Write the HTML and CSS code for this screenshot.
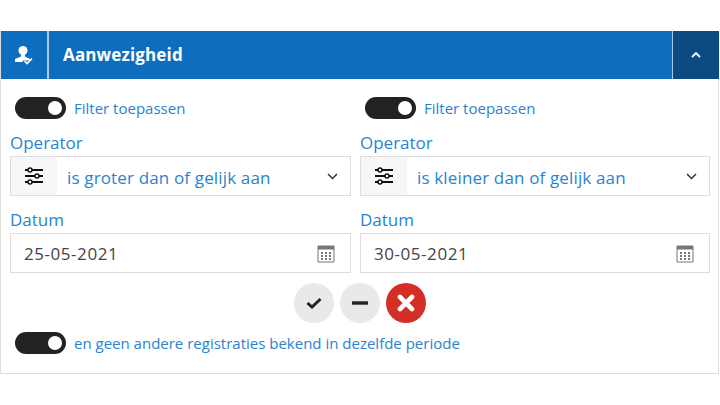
FILE: index.html
```html
<!DOCTYPE html>
<html lang="nl">
<head>
    <meta charset="UTF-8">
    <title>Aanwezigheid</title>
    <link rel="stylesheet" href="styles.css">
</head>
<body>
    <div class="panel">
        <div class="panel-header">
            <div class="header-icon">
                <svg width="20" height="20" viewBox="0 0 20 20">
                    <circle cx="9" cy="5.500" r="4.500" fill="#fff"/>
                    <path d="M7 9h4v2.500l5 2.500v1.500H9.500L8 17H1v-3l6-2.500z" fill="#fff"/>
                    <path d="M10.500 16l2.500 2.500 5-5" fill="none" stroke="#fff" stroke-width="1.600"/>
                </svg>
            </div>
            <div class="header-title">Aanwezigheid</div>
            <div class="header-toggle">
                <svg width="10" height="6" viewBox="0 0 10 6">
                    <path d="M1 5l4-4 4 4" fill="none" stroke="#fff" stroke-width="1.800"/>
                </svg>
            </div>
        </div>
        <div class="panel-body">
            <div class="columns">
                <div class="column">
                    <div class="switch-row">
                        <span class="switch"></span>
                        <span class="switch-label">Filter toepassen</span>
                    </div>
                    <label class="field-label">Operator</label>
                    <div class="field">
                        <span class="addon">
                            <svg width="20" height="18" viewBox="0 0 20 18">
                                <path d="M1 3h18M1 9h18M1 15h18" stroke="#111" stroke-width="2.200"/>
                                <circle cx="6" cy="3" r="2" fill="#fff" stroke="#111" stroke-width="1.500"/>
                                <circle cx="13" cy="9" r="2" fill="#fff" stroke="#111" stroke-width="1.500"/>
                                <circle cx="6" cy="15" r="2" fill="#fff" stroke="#111" stroke-width="1.500"/>
                            </svg>
                        </span>
                        <span class="select-text">is groter dan of gelijk aan</span>
                        <svg class="chevron" width="11" height="7" viewBox="0 0 11 7">
                            <path d="M1 1l4.500 4.500L10 1" fill="none" stroke="#333" stroke-width="1.500"/>
                        </svg>
                    </div>
                    <label class="field-label">Datum</label>
                    <div class="field date-field">
                        <span class="date-text">25-05-2021</span>
                        <svg class="calendar" width="18" height="19" viewBox="0 0 18 19">
                            <use href="#calendar-icon"/>
                        </svg>
                    </div>
                </div>
                <div class="column">
                    <div class="switch-row">
                        <span class="switch"></span>
                        <span class="switch-label">Filter toepassen</span>
                    </div>
                    <label class="field-label">Operator</label>
                    <div class="field">
                        <span class="addon">
                            <svg width="20" height="18" viewBox="0 0 20 18">
                                <path d="M1 3h18M1 9h18M1 15h18" stroke="#111" stroke-width="2.200"/>
                                <circle cx="6" cy="3" r="2" fill="#fff" stroke="#111" stroke-width="1.500"/>
                                <circle cx="13" cy="9" r="2" fill="#fff" stroke="#111" stroke-width="1.500"/>
                                <circle cx="6" cy="15" r="2" fill="#fff" stroke="#111" stroke-width="1.500"/>
                            </svg>
                        </span>
                        <span class="select-text">is kleiner dan of gelijk aan</span>
                        <svg class="chevron" width="11" height="7" viewBox="0 0 11 7">
                            <path d="M1 1l4.500 4.500L10 1" fill="none" stroke="#333" stroke-width="1.500"/>
                        </svg>
                    </div>
                    <label class="field-label">Datum</label>
                    <div class="field date-field">
                        <span class="date-text">30-05-2021</span>
                        <svg class="calendar" width="18" height="19" viewBox="0 0 18 19">
                            <use href="#calendar-icon"/>
                        </svg>
                    </div>
                </div>
            </div>
            <div class="actions">
                <button class="round-btn">
                    <svg width="16" height="12" viewBox="0 0 16 12">
                        <path d="M1.500 6l4.500 4L14.500 2" fill="none" stroke="#222" stroke-width="3"/>
                    </svg>
                </button>
                <button class="round-btn">
                    <svg width="16" height="4" viewBox="0 0 16 4">
                        <path d="M0 2h16" stroke="#222" stroke-width="3.400"/>
                    </svg>
                </button>
                <button class="round-btn danger">
                    <svg width="18" height="18" viewBox="0 0 18 18">
                        <path d="M3 3l12 12M15 3L3 15" stroke="#fff" stroke-width="4.600" stroke-linecap="round"/>
                    </svg>
                </button>
            </div>
            <div class="switch-row last-row">
                <span class="switch"></span>
                <span class="switch-label">en geen andere registraties bekend in dezelfde periode</span>
            </div>
        </div>
    </div>

    <svg class="icon-defs" width="0" height="0">
        <symbol id="calendar-icon" viewBox="0 0 18 19">
            <path d="M1 2h16v16H1z" fill="#fff" stroke="#777"/>
            <path d="M1 2h16v3.500H1z" fill="#777"/>
            <path d="M4 8h2v2H4zM8 8h2v2H8zM12 8h2v2h-2zM4 11h2v2H4zM8 11h2v2H8zM12 11h2v2h-2zM4 14h2v2H4zM8 14h2v2H8zM12 14h2v2h-2z" fill="#777"/>
        </symbol>
    </svg>
</body>
</html>
```

FILE: styles.css
```css
body {
    margin: 0;
    padding-top: 31px;
    font-family: "Open Sans", "Noto Sans", sans-serif;
    background-color: #fff;
}
.panel {
    height: 343px;
    box-sizing: border-box;
    border: 1px solid #ddd;
    border-top: none;
    margin-right: 1px;
}
.panel-header {
    display: flex;
    height: 48px;
    margin-right: -1px;
    background-color: #0d6ebf;
    color: #fff;
}
.header-icon {
    width: 46px;
    border-right: 2px solid #a9cbe8;
    display: flex;
    align-items: center;
    justify-content: center;
}
.header-title {
    flex: 1;
    padding-left: 14px;
    line-height: 48px;
    font-size: 17px;
    font-weight: 700;
    letter-spacing: 0.15px;
}
.header-toggle {
    width: 46px;
    border-left: 1px solid #a9cbe8;
    background-color: #0c4a84;
    display: flex;
    align-items: center;
    justify-content: center;
}
.panel-body {
    padding: 18px 8px 0 9px;
}
.columns {
    display: grid;
    grid-template-columns: 341px 350px;
    gap: 9px;
}
.switch-row {
    display: flex;
    align-items: center;
    gap: 8px;
    height: 22px;
    padding-left: 5px;
}
.switch {
    position: relative;
    width: 51px;
    height: 22px;
    border-radius: 11px;
    background-color: #222;
}
.switch::after {
    content: "";
    position: absolute;
    right: 4px;
    top: 4px;
    width: 14px;
    height: 14px;
    border-radius: 50%;
    background-color: #fff;
}
.switch-label {
    font-size: 15px;
    color: #2a83d0;
}
.field-label {
    display: block;
    margin-top: 12px;
    height: 25px;
    line-height: 24px;
    font-size: 17px;
    color: #2a83d0;
}
.field {
    display: flex;
    align-items: center;
    height: 40px;
    box-sizing: border-box;
    border: 1px solid #ddd;
    background-color: #fff;
}
.addon {
    width: 46px;
    height: 100%;
    background-color: #f7f7f7;
    display: flex;
    align-items: center;
    justify-content: center;
}
.select-text {
    flex: 1;
    padding: 2px 0 0 10px;
    font-size: 17px;
    letter-spacing: 0.15px;
    color: #2a83d0;
}
.chevron {
    margin-right: 12px;
}
.date-field {
    justify-content: space-between;
    padding: 0 15px 0 13px;
}
.date-text {
    font-size: 17px;
    letter-spacing: 0.55px;
    color: #444;
}
.actions {
    display: flex;
    justify-content: center;
    gap: 6px;
    margin-top: 10px;
}
.round-btn {
    width: 40px;
    height: 40px;
    padding: 0;
    border: none;
    border-radius: 50%;
    background-color: #e9e9e9;
    display: flex;
    align-items: center;
    justify-content: center;
}
.round-btn.danger {
    background-color: #d32f27;
}
.last-row {
    margin-top: 9px;
}
.icon-defs {
    display: block;
}
```
